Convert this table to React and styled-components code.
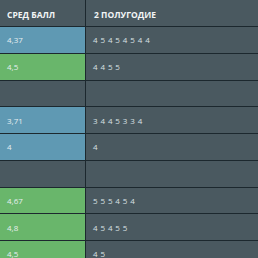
import styled, { createGlobalStyle } from "styled-components";

const Global = createGlobalStyle`
  html, body { margin: 0; padding: 0; background: #4a5960; }
  body { font-family: "Open Sans", "Liberation Sans", sans-serif; }
`;

const rows = [
  { avg: "4,37", tone: "blue", marks: "4 5 4 5 4 5 4 4" },
  { avg: "4,5", tone: "green", marks: "4 4 5 5" },
  { empty: true },
  { avg: "3,71", tone: "blue", marks: "3 4 4 5 3 3 4" },
  { avg: "4", tone: "blue", marks: "4" },
  { empty: true },
  { avg: "4,67", tone: "green", marks: "5 5 5 4 5 4" },
  { avg: "4,8", tone: "green", marks: "4 5 4 5 5" },
  { avg: "4,5", tone: "green", marks: "4 5" },
];

const tones = { blue: "#5f99b3", green: "#69b66b", none: "#4a5960" };

export default function App() {
  return (
    <>
      <Global />
      <Table>
        <HeadRow>
          <HeadCell>СРЕД БАЛЛ</HeadCell>
          <HeadCell>2 ПОЛУГОДИЕ</HeadCell>
        </HeadRow>
        {rows.map((r, i) => (
          <Row key={i}>
            <AvgCell $tone={r.empty ? "none" : r.tone}>{r.avg}</AvgCell>
            <Cell>{r.marks}</Cell>
          </Row>
        ))}
      </Table>
    </>
  );
}

const Table = styled.div`
  width: 258px;
  height: 258px;
  overflow: hidden;
  background: #4a5960;
`;

const HeadRow = styled.div`
  display: grid;
  grid-template-columns: 86px 1fr;
  height: 26px;
  border-bottom: 1px solid #1c282e;
`;

const Row = styled.div`
  display: grid;
  grid-template-columns: 86px 1fr;
  height: 25.75px;
  border-bottom: 1px solid #1c282e;
`;

const HeadCell = styled.div`
  display: flex;
  align-items: center;
  padding: 2px 0 0 7px;
  color: #f2f5f6;
  font-size: 8.5px;
  font-weight: 700;
  &:first-child { border-right: 1px solid #1c282e; }
  & + & { padding-left: 8px; }
`;

const AvgCell = styled.div`
  display: flex;
  align-items: center;
  padding-left: 7px;
  background: ${(p) => tones[p.$tone]};
  border-right: 1px solid #1c282e;
  color: #e6eef0;
  font-size: 8px;
`;

const Cell = styled.div`
  display: flex;
  align-items: center;
  padding-left: 7px;
  color: #d9e0e3;
  font-size: 8px;
  letter-spacing: 0.4px;
`;
